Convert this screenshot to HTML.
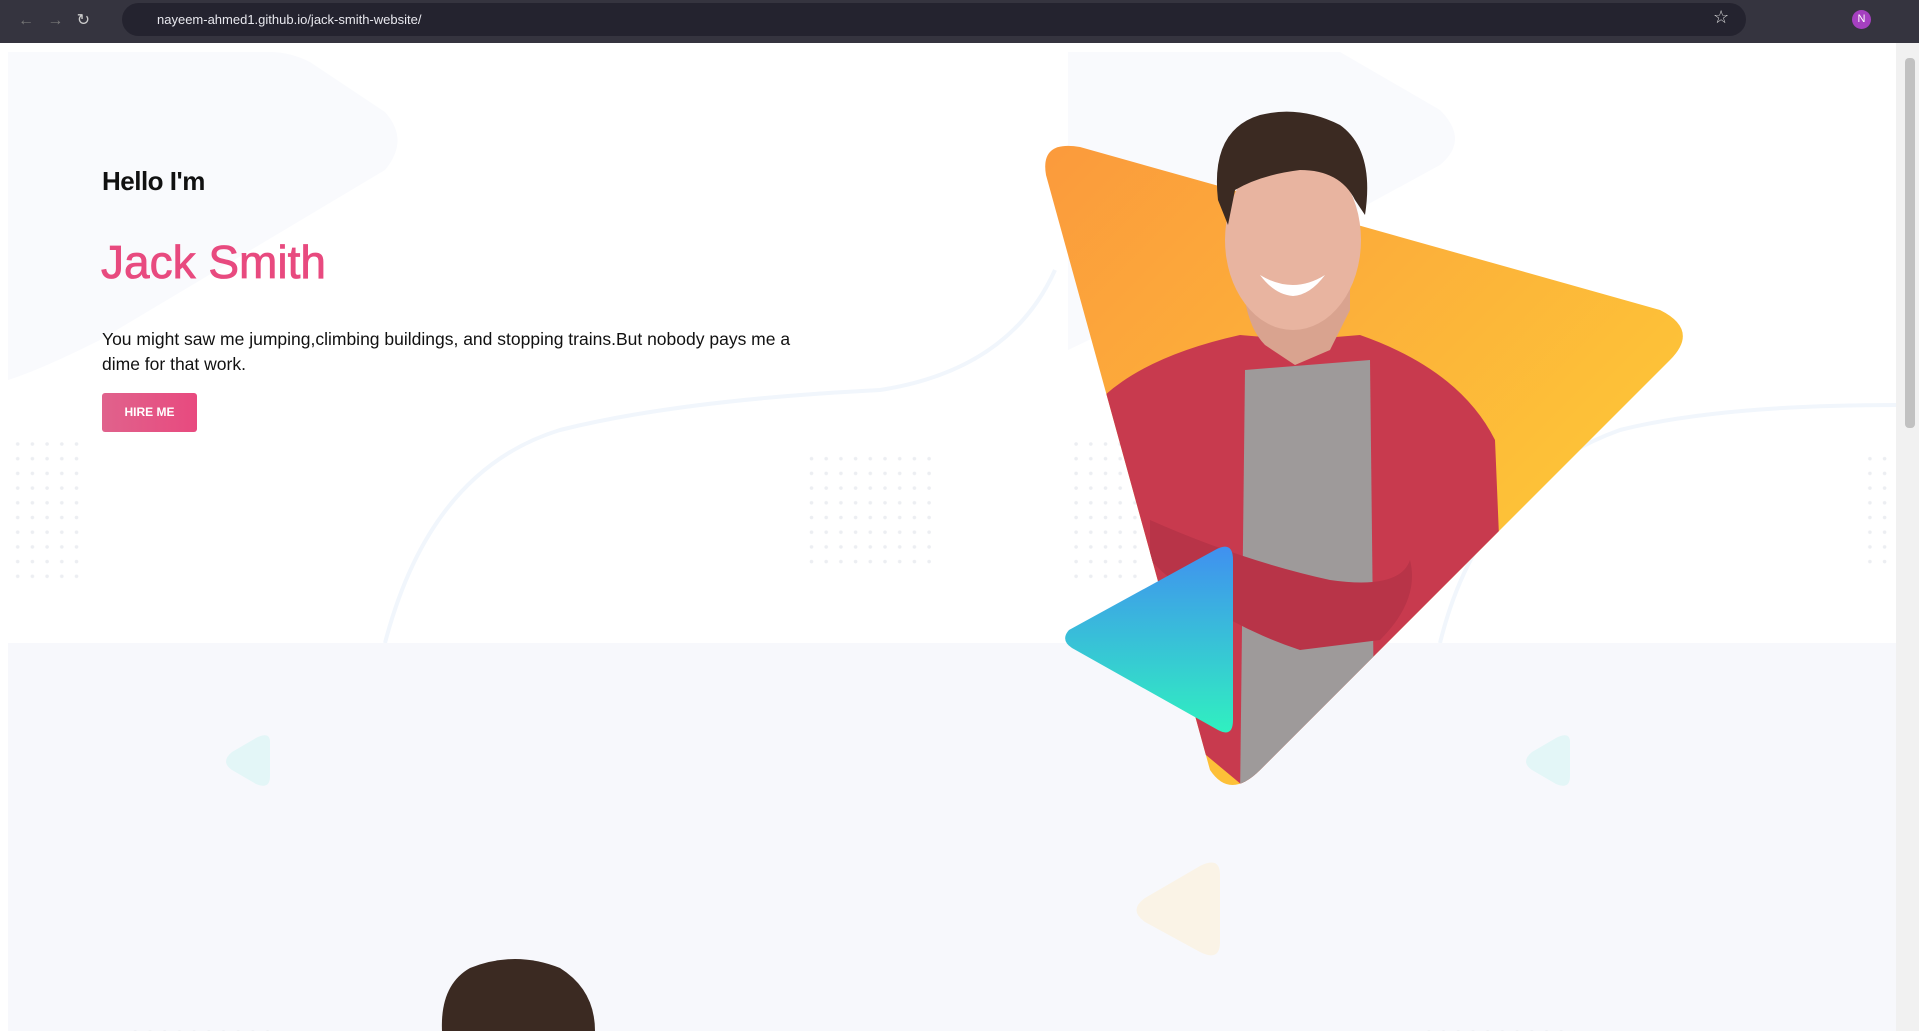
<!DOCTYPE html>
<html><head><meta charset="utf-8"><style>
*{margin:0;padding:0;box-sizing:border-box}
body{width:1919px;height:1031px;overflow:hidden;background:#fff;font-family:"Liberation Sans",sans-serif;position:relative}
.bar{position:absolute;left:0;top:0;width:1919px;height:43px;background:#35343f}
.url{position:absolute;left:122px;top:3px;width:1624px;height:33px;border-radius:17px;background:#24232f;color:#e8e8ee;font-size:13px;line-height:33px;padding-left:35px}
.t{position:absolute;color:#111}
</style></head><body>
<svg width="1919" height="1031" style="position:absolute;left:0;top:0">
<defs>
<linearGradient id="og" x1="0" y1="0" x2="1" y2="1"><stop offset="0" stop-color="#fb9a3c"/><stop offset="1" stop-color="#fed636"/></linearGradient>
<linearGradient id="tg" x1="0" y1="0" x2="0" y2="1"><stop offset="0" stop-color="#4090f0"/><stop offset="1" stop-color="#30f0c0"/></linearGradient>
<clipPath id="tri"><path d="M1046 175 Q1040 140 1080 147 L1660 310 Q1700 330 1670 360 L1260 770 Q1230 800 1210 770 Z"/><rect x="1180" y="100" width="220" height="260"/></clipPath>
<pattern id="dots" width="14.7" height="14.7" patternUnits="userSpaceOnUse"><circle cx="3" cy="3" r="1.8" fill="#eceef2"/></pattern>
</defs>
<rect x="8" y="43" width="1888" height="600" fill="#fff"/>
<path d="M8 52 L270 52 Q290 52 310 62 L385 112 Q410 140 385 170 L100 340 Q40 370 8 380 Z" fill="#f9fafd"/>
<path d="M1068 52 L1340 52 L1440 110 Q1470 140 1440 165 L1330 225 L1068 350 Z" fill="#f9fafd"/>
<path d="M385 643 Q430 470 560 430 Q680 400 880 390 Q1010 370 1055 270" fill="none" stroke="#f1f6fc" stroke-width="4"/>
<path d="M1440 643 Q1480 480 1620 430 Q1720 405 1896 405" fill="none" stroke="#f1f6fc" stroke-width="4"/>
<rect x="8" y="643" width="1888" height="388" fill="#f7f8fc"/>
<rect x="8" y="432" width="76" height="150" fill="url(#dots)"/>
<rect x="808" y="450" width="124" height="124" fill="url(#dots)"/>
<rect x="1066" y="432" width="80" height="150" fill="url(#dots)"/>
<rect x="1866" y="450" width="30" height="124" fill="url(#dots)"/>
<rect x="125" y="1020" width="150" height="11" fill="url(#dots)"/>
<rect x="1425" y="1020" width="150" height="11" fill="url(#dots)"/>
<path d="M270 742 L270 776 Q270 790 256 784 L232 770 Q220 762 232 752 L256 738 Q270 731 270 742 Z" fill="#e3f6f7"/>
<path d="M1570 742 L1570 776 Q1570 790 1556 784 L1532 770 Q1520 762 1532 752 L1556 738 Q1570 731 1570 742 Z" fill="#e3f6f7"/>
<path d="M1220 875 L1220 942 Q1220 962 1200 952 L1145 922 Q1128 910 1145 898 L1200 866 Q1220 856 1220 875 Z" fill="#faf3e6"/>
<path d="M1046 175 Q1040 140 1080 147 L1660 310 Q1700 330 1670 360 L1260 770 Q1230 800 1210 770 Z" fill="url(#og)"/>
<g clip-path="url(#tri)">
<path d="M1105 395 Q1150 355 1240 335 L1300 340 L1360 335 Q1460 370 1495 440 L1500 560 L1260 800 L1140 700 L1100 520 Z" fill="#c83a4e"/>
<path d="M1245 370 L1370 360 L1375 800 L1240 800 Z" fill="#9e9a9a"/>
<path d="M1150 520 Q1240 560 1330 580 Q1400 590 1410 560 Q1420 600 1380 640 L1300 650 Q1210 620 1150 560 Z" fill="#b83448"/>
</g>
<path d="M1245 300 Q1250 330 1265 345 L1295 365 L1330 350 L1350 310 L1350 280 Z" fill="#d9a38f"/>
<ellipse cx="1293" cy="240" rx="68" ry="90" fill="#e8b4a0"/>
<path d="M1218 200 Q1210 130 1260 115 Q1300 105 1340 125 Q1375 150 1365 215 L1355 200 Q1340 170 1300 170 Q1260 175 1235 190 L1228 225 Z" fill="#3b2a22"/>
<path d="M1260 275 Q1293 295 1325 275 Q1310 295 1293 296 Q1275 295 1260 275 Z" fill="#fff"/>
<path d="M1069 630 Q1060 640 1072 648 L1218 730 Q1233 738 1233 720 L1233 560 Q1233 540 1215 550 Z" fill="url(#tg)"/>
<path d="M442 1031 Q440 985 470 968 Q515 950 560 968 Q595 990 595 1031 Z" fill="#3b2a22"/>
<rect x="1896" y="43" width="23" height="988" fill="#f1f1f1"/>
<rect x="1905" y="58" width="10" height="370" rx="4" fill="#c1c1c1"/>
</svg>
<div class="bar"><div class="url">nayeem-ahmed1.github.io/jack-smith-website/</div>
<div style="position:absolute;left:18px;top:10px;color:#777;font-size:16px">←&nbsp;&nbsp;&nbsp;→&nbsp;&nbsp;&nbsp;<span style="color:#ccc">↻</span></div>
<div style="position:absolute;left:1852px;top:10px;width:19px;height:19px;border-radius:50%;background:#a540c0;color:#fff;font-size:11px;text-align:center;line-height:19px">N</div>
<div style="position:absolute;left:1713px;top:7px;color:#ddd;font-size:18px">☆</div>
</div>
<div class="t" style="left:102px;top:166px;font-size:26px;font-weight:bold;letter-spacing:-0.5px">Hello I'm</div>
<div class="t" style="left:101px;top:235px;font-size:46px;color:#e84a7f;-webkit-text-stroke:0.8px #e84a7f">Jack Smith</div>
<div class="t" style="left:102px;top:327px;font-size:17.5px;line-height:25px;width:730px">You might saw me jumping,climbing buildings, and stopping trains.But nobody pays me a dime for that work.</div>
<div style="position:absolute;left:102px;top:393px;width:95px;height:39px;border-radius:3px;background:linear-gradient(90deg,#e0628c,#e84a7f);color:#fff;font-weight:bold;font-size:12px;text-align:center;line-height:39px">HIRE ME</div>
</body></html>
